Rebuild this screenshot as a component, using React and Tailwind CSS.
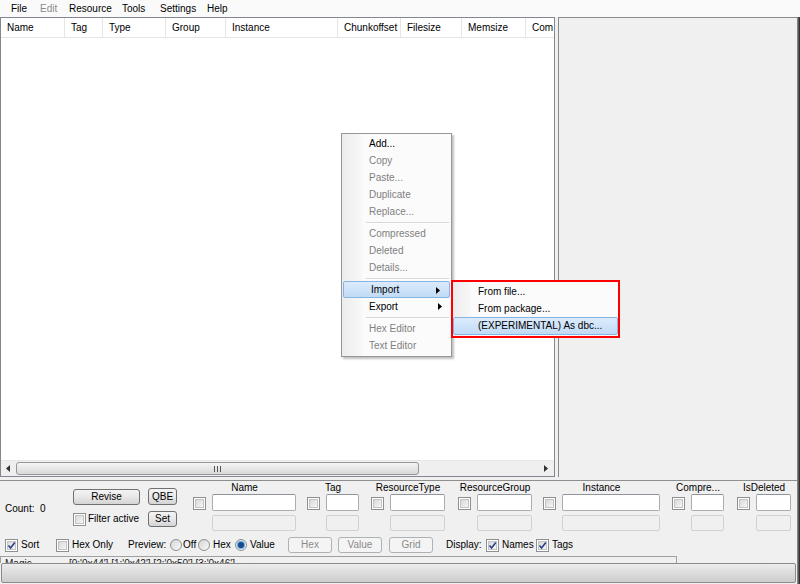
import React from 'react'

const COLUMNS = [
  { label: 'Name', w: 64 },
  { label: 'Tag', w: 38 },
  { label: 'Type', w: 63 },
  { label: 'Group', w: 60 },
  { label: 'Instance', w: 112 },
  { label: 'Chunkoffset', w: 63 },
  { label: 'Filesize', w: 61 },
  { label: 'Memsize', w: 64 },
  { label: 'Com', w: 40 },
]

const FILTERS = [
  { label: 'Name', input: 84, ml: 0 },
  { label: 'Tag', input: 33, ml: 11 },
  { label: 'ResourceType', input: 55, ml: 12 },
  { label: 'ResourceGroup', input: 55, ml: 13 },
  { label: 'Instance', input: 98, ml: 11 },
  { label: 'Compre...', input: 33, ml: 12 },
  { label: 'IsDeleted', input: 35, ml: 13 },
]

function Checkbox({ checked }) {
  return (
    <span className="inline-flex w-[13px] h-[13px] flex-shrink-0 items-center justify-center border border-[#8e8f8f] bg-white">
      <span className="w-[9px] h-[9px] flex items-center justify-center bg-gradient-to-br from-[#d8d8d8] to-[#f6f6f6] border border-[#c4c4c4]">
        {checked && (
          <svg width="9" height="9" viewBox="0 0 9 9" className="-m-px">
            <path d="M1.5 4.5 L3.6 7 L7.8 1.5" fill="none" stroke="#2a3f8c" strokeWidth="1.6" />
          </svg>
        )}
      </span>
    </span>
  )
}

function Radio({ checked }) {
  return (
    <span className="inline-flex w-[12px] h-[12px] flex-shrink-0 items-center justify-center rounded-full border border-[#8e8f8f] bg-gradient-to-br from-[#d4d4d4] to-[#fbfbfb]">
      {checked && (
        <span className="w-[6px] h-[6px] rounded-full bg-[#1a4a8a] shadow-[0_0_0_1px_#5ab0f0]" />
      )}
    </span>
  )
}

function Btn({ children, w, h = 16, disabled }) {
  return (
    <span
      style={{ width: w, height: h }}
      className={
        disabled
          ? 'inline-flex flex-shrink-0 items-center justify-center rounded-[3px] border border-[#adb2b5] bg-[#f4f4f4] text-[#8a8a8a]'
          : 'inline-flex flex-shrink-0 items-center justify-center rounded-[3px] border border-[#707070] bg-gradient-to-b from-[#f4f4f4] via-[#e8e8e8] to-[#d4d4d4] text-black'
      }
    >
      {children}
    </span>
  )
}

function MenuItem({ children, gray, hot, arrow }) {
  return (
    <div
      className={
        'relative h-[17px] flex items-center pl-[27px] ' +
        (hot ? 'mx-px rounded-[2px] border border-[#86b4e4] bg-gradient-to-b from-[#dcebfc] to-[#c1dbf5] pl-[26px]' : '')
      }
    >
      <span className={gray ? 'text-[#7f7f7f]' : 'text-black'}>{children}</span>
      {arrow && (
        <svg width="4" height="7" viewBox="0 0 4 7" className="absolute right-[9px] top-[5px]">
          <path d="M0 0 L4 3.5 L0 7 Z" fill="#000" />
        </svg>
      )}
    </div>
  )
}

function Sep() {
  return (
    <div className="h-[5px] flex items-center pl-[24px] pr-[2px]">
      <div className="w-full border-t border-[#d7d7d7] border-b-white border-b" />
    </div>
  )
}

export default function App() {
  return (
    <div className="relative w-[800px] h-[584px] overflow-hidden bg-[#f0f0f0] flex flex-col text-[10px] leading-[12px] text-black font-['Liberation_Sans',Arial,sans-serif]">
      {/* menu bar */}
      <div className="h-[17px] flex items-center bg-[#fafafa] pl-[11px]">
        <span className="w-[29px]">File</span>
        <span className="w-[29px] text-[#8a8a8a]">Edit</span>
        <span className="w-[53px]">Resource</span>
        <span className="w-[38px]">Tools</span>
        <span className="w-[47px]">Settings</span>
        <span>Help</span>
      </div>

      <div className="flex flex-1">
        <div className="w-[797px] flex flex-col">
          {/* list + right panel */}
          <div className="flex h-[461px]">
            <div className="w-[555px] h-[460px] flex-shrink-0 border border-[#828790] bg-white flex flex-col">
              <div className="h-[20px] flex border-b border-[#e5e5e5] overflow-hidden">
                {COLUMNS.map((c) => (
                  <div
                    key={c.label}
                    style={{ width: c.w }}
                    className="flex-shrink-0 flex items-center pl-[6px] border-r border-[#e5e5e5] whitespace-nowrap overflow-hidden"
                  >
                    {c.label}
                  </div>
                ))}
              </div>
              <div className="flex-1" />
              <div className="h-[16px] flex items-center bg-[#efefef] border-t border-[#e8e8e8]">
                <svg width="4" height="7" viewBox="0 0 4 7" className="ml-[5px]">
                  <path d="M4 0 L0 3.5 L4 7 Z" fill="#333" />
                </svg>
                <div className="ml-[6px] w-[403px] h-[13px] rounded-[3px] border border-[#979797] bg-gradient-to-b from-[#f4f4f4] to-[#d9d9d9] flex items-center justify-center">
                  <svg width="7" height="6" viewBox="0 0 7 6">
                    <path d="M0.5 0 V6 M3.5 0 V6 M6.5 0 V6" stroke="#555" strokeWidth="1" />
                  </svg>
                </div>
                <div className="flex-1" />
                <svg width="4" height="7" viewBox="0 0 4 7" className="mr-[6px]">
                  <path d="M0 0 L4 3.5 L0 7 Z" fill="#333" />
                </svg>
              </div>
            </div>
            <div className="w-[3px] flex-shrink-0" />
            <div className="w-[239px] h-[460px] flex-shrink-0 border-l border-t border-[#8a8a8a] bg-[#f0f0f0]" />
          </div>

          {/* bottom panel */}
          <div className="flex-1 flex flex-col mt-[2px] border-t border-[#8e8e8e]">
            <div className="h-[56px] flex items-start">
              <div className="w-[73px] flex-shrink-0 pl-[5px] pt-[22px] whitespace-pre">Count:  0</div>
              <div className="w-[120px] flex-shrink-0 flex flex-col">
                <div className="mt-[7px] h-[17px] flex items-center">
                  <Btn w={67}>Revise</Btn>
                  <span className="ml-[8px] flex">
                    <Btn w={29} h={17}>QBE</Btn>
                  </span>
                </div>
                <div className="mt-[6px] h-[16px] flex items-center">
                  <span className="w-[75px] flex-shrink-0 flex items-center">
                    <Checkbox />
                    <span className="ml-[2px]">Filter active</span>
                  </span>
                  <Btn w={29}>Set</Btn>
                </div>
              </div>
              {FILTERS.map((f) => (
                <div
                  key={f.label}
                  style={{ marginLeft: f.ml, width: f.input + 19 }}
                  className="flex-shrink-0 flex flex-col items-center"
                >
                  <div className="h-[13px] leading-[13px] whitespace-nowrap">{f.label}</div>
                  <div className="flex gap-[6px] self-stretch">
                    <span className="mt-[3px] flex">
                      <Checkbox />
                    </span>
                    <div className="flex flex-col gap-[4px]">
                      <div style={{ width: f.input }} className="h-[17px] rounded-[2px] border border-[#abadb3] border-t-[#8f939b] bg-white" />
                      <div style={{ width: f.input }} className="h-[16px] rounded-[2px] border border-[#cfd1d4] bg-[#f0f0f0]" />
                    </div>
                  </div>
                </div>
              ))}
            </div>

            <div className="h-[16px] flex items-center whitespace-nowrap">
              <span className="w-[56px] flex-shrink-0 pl-[5px] flex items-center">
                <Checkbox checked />
                <span className="ml-[3px]">Sort</span>
              </span>
              <span className="w-[72px] flex-shrink-0 flex items-center">
                <Checkbox />
                <span className="ml-[3px]">Hex Only</span>
              </span>
              <span className="w-[42px] flex-shrink-0">Preview:</span>
              <span className="w-[28px] flex-shrink-0 flex items-center">
                <Radio />
                <span className="ml-px">Off</span>
              </span>
              <span className="w-[37px] flex-shrink-0 flex items-center">
                <Radio />
                <span className="ml-[3px]">Hex</span>
              </span>
              <span className="w-[53px] flex-shrink-0 flex items-center">
                <Radio checked />
                <span className="ml-[3px]">Value</span>
              </span>
              <Btn w={44} disabled>Hex</Btn>
              <span className="ml-[6px] flex">
                <Btn w={44} disabled>Value</Btn>
              </span>
              <span className="ml-[7px] flex">
                <Btn w={44} disabled>Grid</Btn>
              </span>
              <span className="ml-[13px] w-[40px] flex-shrink-0">Display:</span>
              <span className="w-[50px] flex-shrink-0 flex items-center">
                <Checkbox checked />
                <span className="ml-[3px]">Names</span>
              </span>
              <span className="flex items-center">
                <Checkbox checked />
                <span className="ml-[3px]">Tags</span>
              </span>
            </div>

            <div className="h-[10px] overflow-hidden">
              <div className="mt-[3px] w-[677px] h-[20px] border border-[#a0a0a0] flex pt-px text-[#222]">
                <span className="w-[68px] pl-[4px]">Magic</span>
                <span>[0:'0x44'] [1:'0x42'] [2:'0x50'] [3:'0x46']</span>
              </div>
            </div>

            <div className="h-[20px] mx-px rounded-[2px] border border-[#8a8a8a] bg-gradient-to-b from-[#ececec] to-[#cdcdcd]" />
          </div>
        </div>
        <div className="w-[3px] bg-gradient-to-r from-[#9a9a9a] to-[#202020]" />
      </div>

      {/* context menu */}
      <div className="absolute left-[341px] top-[133px] w-[111px] h-[224px] border border-[#979797] bg-[#fbfbfb] shadow-[2px_2px_2px_rgba(0,0,0,0.25)] pt-px">
        <div className="absolute left-0 top-0 bottom-0 w-[20px] bg-gradient-to-r from-[#ececec] to-[#f8f8f8]" />
        <div className="relative">
          <MenuItem>Add...</MenuItem>
          <MenuItem gray>Copy</MenuItem>
          <MenuItem gray>Paste...</MenuItem>
          <MenuItem gray>Duplicate</MenuItem>
          <MenuItem gray>Replace...</MenuItem>
          <Sep />
          <MenuItem gray>Compressed</MenuItem>
          <MenuItem gray>Deleted</MenuItem>
          <MenuItem gray>Details...</MenuItem>
          <Sep />
          <MenuItem hot arrow>Import</MenuItem>
          <MenuItem arrow>Export</MenuItem>
          <Sep />
          <MenuItem gray>Hex Editor</MenuItem>
          <MenuItem gray>Text Editor</MenuItem>
        </div>
      </div>

      {/* submenu with red outline */}
      <div className="absolute left-[451px] top-[280px] w-[169px] h-[58px] border-2 border-[#ff0000] bg-[#fbfbfb] pt-px">
        <div className="absolute left-0 top-0 bottom-0 w-[18px] bg-gradient-to-r from-[#ececec] to-[#f8f8f8]" />
        <div className="relative">
          <div className="h-[17px] flex items-center pl-[25px]">From file...</div>
          <div className="h-[17px] flex items-center pl-[25px]">From package...</div>
          <div className="h-[18px] flex items-center pl-[24px] rounded-[2px] border border-[#86b4e4] bg-gradient-to-b from-[#dcebfc] to-[#c1dbf5]">
            (EXPERIMENTAL) As dbc...
          </div>
        </div>
      </div>
    </div>
  )
}
